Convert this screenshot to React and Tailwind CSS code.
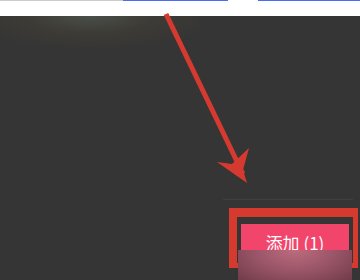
import React from "react";

export default function App() {
  return (
    <div className="relative w-[360px] h-[280px] overflow-hidden bg-[#353535] flex flex-col" style={{ fontFamily: '"Noto Sans CJK SC", "Noto Sans", sans-serif' }}>
      <div className="h-[16px] bg-white flex items-start shrink-0">
        <div className="w-[123px] h-px bg-[#c9cbd0]" />
        <div className="w-[105px] h-px bg-[#4a6ef0]" />
        <div className="w-[30px] h-px bg-white" />
        <div className="flex-1 h-px bg-[#4a6ef0]" />
      </div>
      <div className="relative flex-1 flex flex-col">
        <div className="absolute left-0 top-0 w-[200px] h-[30px] bg-[radial-gradient(ellipse_at_45%_0%,#4a4f49_0%,#3d3b35_40%,#353535_80%)]" />
        <div className="flex-1" />
        <div className="flex justify-end pr-[7px]">
          <div className="w-[130px] h-px bg-[#404040]" />
        </div>
        <div className="flex justify-end pr-[11px] pb-[18px] pt-[24px]">
          <button className="w-[108px] h-[38px] bg-[#f2456b] text-white text-[17px] flex items-center justify-center">
            添加 (1)
          </button>
        </div>
      </div>

      <svg className="absolute left-0 top-0" width="360" height="280" viewBox="0 0 360 280">
        <line x1="166" y1="14" x2="243" y2="174" stroke="#d43a30" strokeWidth="5" />
        <polygon points="247,183 217,162 232,164 249,148 243,170" fill="#d43a30" />
      </svg>

      <div className="absolute left-[229px] top-[208px] w-[129px] h-[60px] border-l-8 border-t-[9px] border-r-[5px] border-b-[5px] border-[#d63a2f]" />
      <div className="absolute left-[238px] top-[250px] w-[114px] h-[30px] bg-[radial-gradient(ellipse_at_50%_0%,#bc6c7e_0%,#9a5568_50%,#703c4a_100%)]" />
    </div>
  );
}
